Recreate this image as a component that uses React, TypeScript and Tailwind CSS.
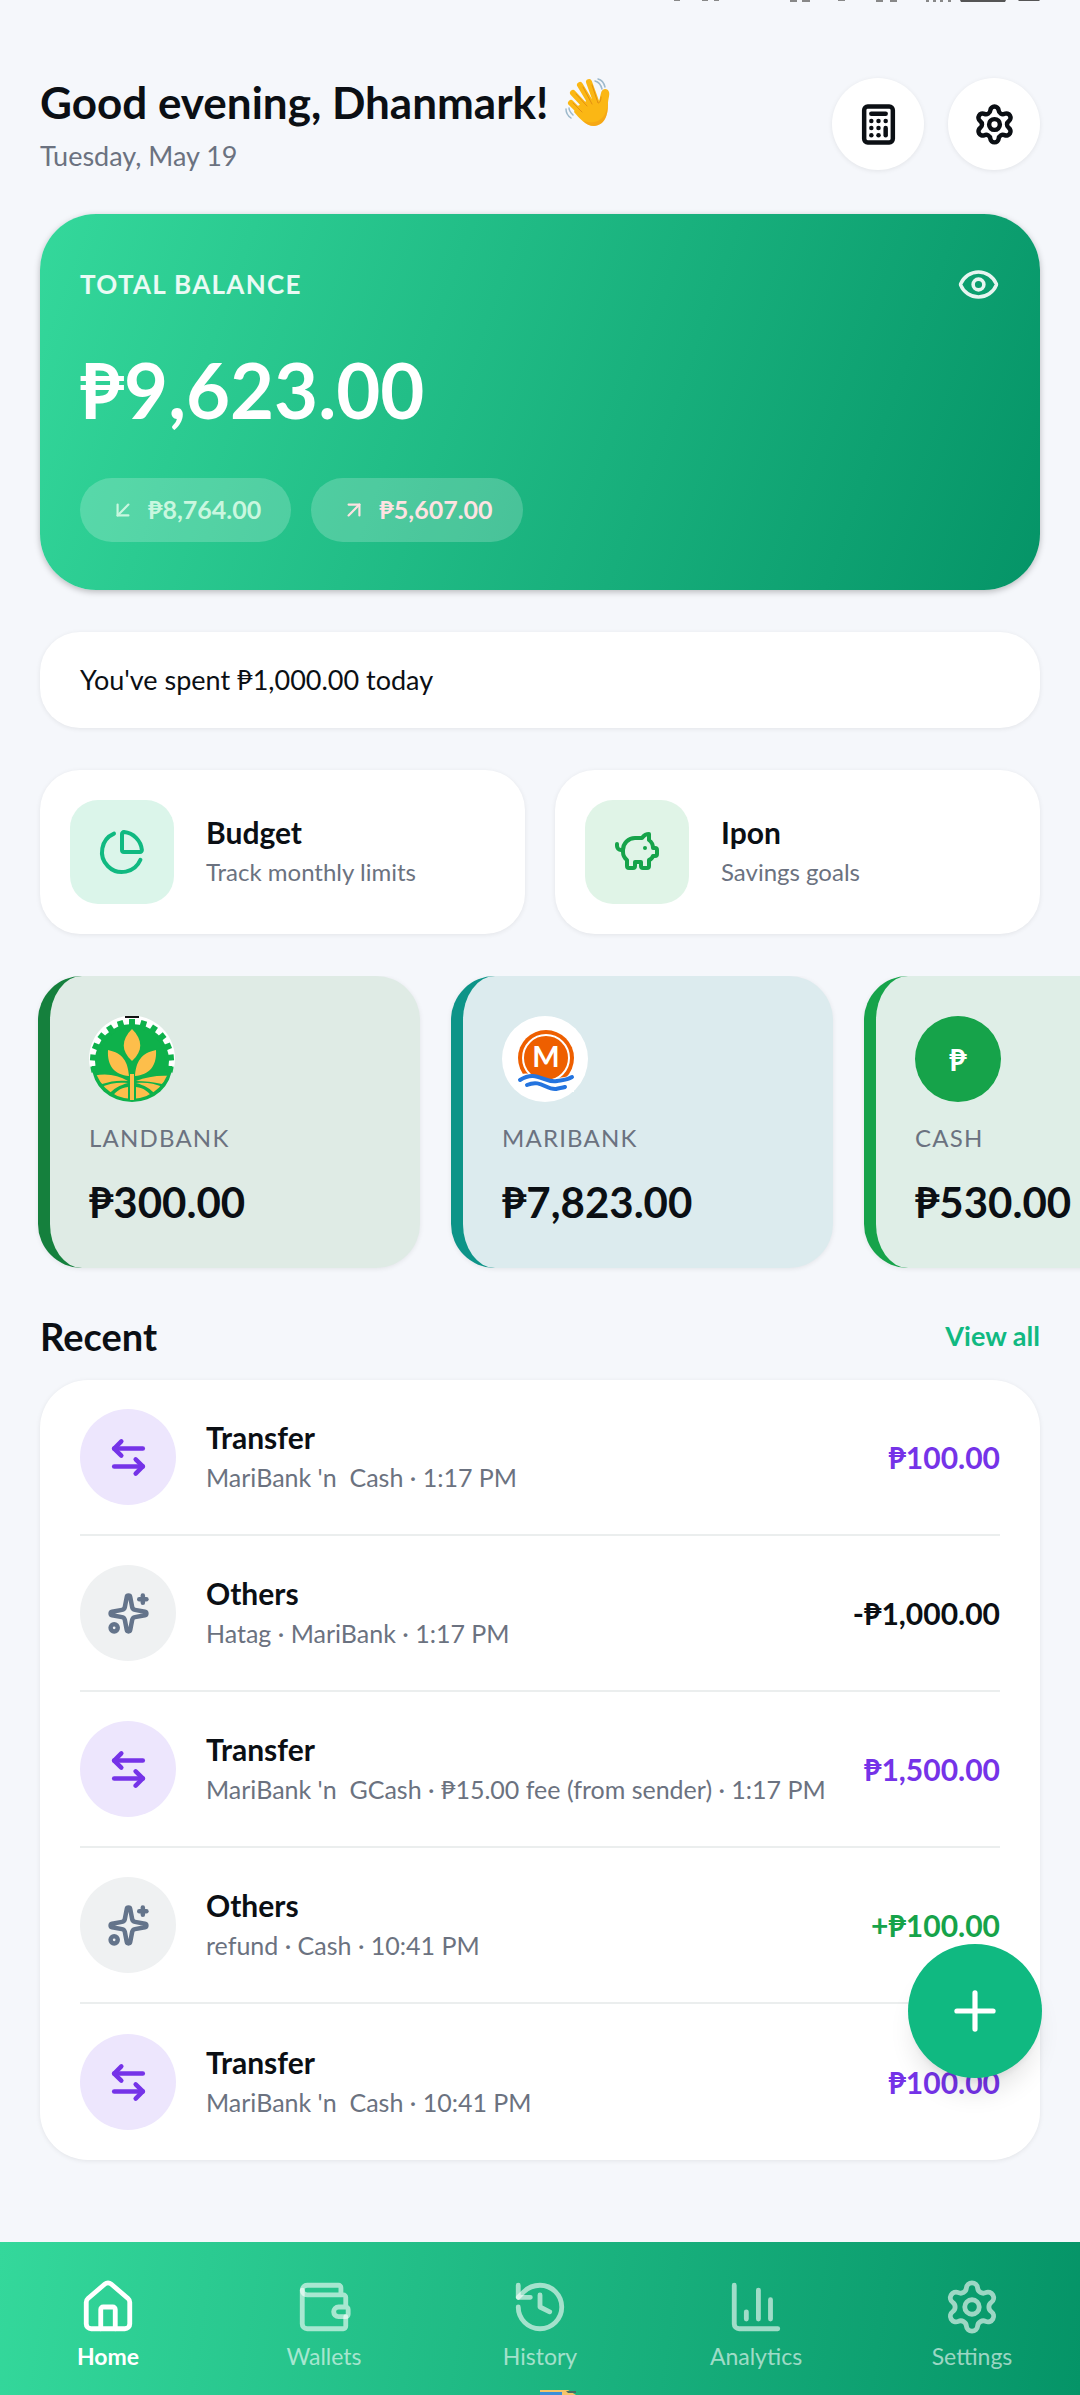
import React from 'react';
import {
  ArrowDownLeft,
  ArrowLeftRight,
  ArrowUpRight,
  Calculator,
  ChartColumn,
  ChartPie,
  Eye,
  History,
  House,
  PiggyBank,
  Plus,
  Settings,
  Sparkles,
  Wallet,
} from 'lucide-react';

const transactions = [
  { kind: 'transfer', title: 'Transfer', detail: "MariBank 'n\u00a0 Cash · 1:17 PM", amount: '₱100.00', color: 'text-[#7533e8]' },
  { kind: 'other', title: 'Others', detail: 'Hatag · MariBank · 1:17 PM', amount: '-₱1,000.00', color: 'text-[#0b0f14]' },
  { kind: 'transfer', title: 'Transfer', detail: "MariBank 'n\u00a0 GCash · ₱15.00 fee (from sender) · 1:17 PM", amount: '₱1,500.00', color: 'text-[#7533e8]' },
  { kind: 'other', title: 'Others', detail: 'refund · Cash · 10:41 PM', amount: '+₱100.00', color: 'text-[#16a34a]' },
  { kind: 'transfer', title: 'Transfer', detail: "MariBank 'n\u00a0 Cash · 10:41 PM", amount: '₱100.00', color: 'text-[#7533e8]' },
];

const tabs = [
  { label: 'Home', icon: House, active: true },
  { label: 'Wallets', icon: Wallet, active: false },
  { label: 'History', icon: History, active: false },
  { label: 'Analytics', icon: ChartColumn, active: false },
  { label: 'Settings', icon: Settings, active: false },
];

const WavingHand = () => (
  <svg viewBox="0 0 48 50" className="h-[50px] w-12 shrink-0" role="img" aria-label="Waving hand">
    <g fill="none" stroke="#9db9cb" strokeWidth="1.5" strokeLinecap="round">
      <path d="M31 4c4 1 6 4 7 8M34 2c4 1 6 4 7 8M2 32c0 4 2 7 5 9M5 31c0 3 2 5 4 7" />
    </g>
    <g stroke="#fbb714" strokeWidth="6" strokeLinecap="round">
      <path d="M7 26l12 12M9 16l14 15M16 8l12 20M25 5l8 22" />
    </g>
    <path
      d="M12 30l14-8 8 4c2-3 2-7 3-10 1-5 7-5 8-1 1 3-1 7-1 12 0 11-3 21-14 22-8 0-15-8-20-14z"
      fill="#fbb714"
    />
    <path
      d="M12 17l11 12M19 10l9 17M28 8l6 18c2 0 3-3 3-6M9 26l9 9"
      fill="none"
      stroke="#e39012"
      strokeWidth="1"
      strokeLinecap="round"
    />
    <path d="M44 27c0 11-3 21-14 22-4 0-8-2-11-5 16 5 23-4 25-17z" fill="#f19a16" opacity=".5" />
  </svg>
);

const teeth = [0, 17, 34, 51, 68, 85, 102, 258, 275, 292, 309, 326, 343];

const LandbankLogo = () => (
  <svg viewBox="0 0 86 86" className="size-[86px]" aria-hidden="true">
    <defs>
      <clipPath id="field">
        <circle cx="43" cy="45" r="38" />
      </clipPath>
    </defs>
    <path d="M1 52a43 43 0 1 1 84 0z" fill="#fff" />
    <path d="M36 1h14" stroke="#111" strokeWidth="2" />
    <circle cx="43" cy="45" r="37" fill="#0eb14b" />
    <path d="M3 50a40 36 0 0 0 80 0z" fill="#0eb14b" />
    {teeth.map((a) => (
      <rect key={a} x="40" y="3" width="6" height="9" fill="#0eb14b" transform={`rotate(${a} 43 45)`} />
    ))}
    <g fill="#fdbe4b">
      <path d="M43 13c11 11 11 22 0 32-11-10-11-21 0-32z" />
      <path d="M19 34c15 3 20 12 21 26-14-1-22-10-21-26zM67 34c-15 3-20 12-21 26 14-1 22-10 21-26z" />
      <g clipPath="url(#field)">
        <path d="M4 60c13-3 25-1 35 5-9-1-17 0-26 3zM82 60c-13-1-25 1-35 5 9 0 17 1 26 3z" />
        <path d="M12 71c9-4 18-5 27-4-8 2-15 6-20 12zM74 71c-9-4-18-5-27-4 8 2 15 6 20 12z" />
        <path d="M22 82c4-6 9-10 17-11v14zM64 82c-4-6-9-10-17-11v14z" />
      </g>
      <path d="M41 58h4v26h-4z" />
    </g>
  </svg>
);

const MaribankLogo = () => (
  <svg viewBox="0 0 86 86" className="size-[86px]" aria-hidden="true">
    <circle cx="43" cy="43" r="43" fill="#fff" />
    <circle cx="44" cy="42" r="28" fill="#ee5f00" />
    <circle cx="44" cy="42" r="23" fill="none" stroke="#fff" strokeWidth="2" />
    <text x="44" y="51" textAnchor="middle" fontSize="29" fontWeight="700" fill="#fff">
      M
    </text>
    <path d="M13 62c14-12 24 4 38 1 8-2 13-1 21-5v18H20z" fill="#fff" />
    <g fill="none" stroke="#2474df" strokeWidth="4" strokeLinecap="round">
      <path d="M18 64c17-11 24 4 37 1 6-1 10-1 15-4" />
      <path d="M25 69c14-6 19 5 29 4 4-1 6-1 9-2" />
    </g>
  </svg>
);

const CashLogo = () => (
  <span className="flex size-[86px] items-center justify-center rounded-full bg-[#16a34a] text-[30px] font-bold text-white">
    ₱
  </span>
);

const wallets = [
  { name: 'LANDBANK', amount: '₱300.00', logo: LandbankLogo, style: 'border-[#15803d] bg-[#dfebe5]' },
  { name: 'MARIBANK', amount: '₱7,823.00', logo: MaribankLogo, style: 'border-[#0d9488] bg-[#dcebee]' },
  { name: 'CASH', amount: '₱530.00', logo: CashLogo, style: 'border-[#16a34a] bg-[#dfeee7]' },
];

const StatusBar = () => (
  <svg viewBox="0 0 400 5" className="ml-auto h-[5px] w-[400px]" aria-hidden="true">
    <path
      d="M34 0h6M62 0h6M74 0h5M150 1h7M162 1h8M198 0h7M236 1h7M250 1h7M286 1h3M293 1h3M300 1h3M308 1h3"
      stroke="#888"
      strokeWidth="2"
    />
    <path d="M320 0h46l-1 2h-44zM378 0h22l-1 1h-20z" fill="#555" />
  </svg>
);

const Header = () => (
  <header className="flex items-center justify-between">
    <div>
      <h1 className="flex items-center gap-4 text-[44px] leading-[56px] font-bold">
        Good evening, Dhanmark!
        <WavingHand />
      </h1>
      <p className="mt-2 text-[27px] leading-9 text-[#6b7280]">Tuesday, May 19</p>
    </div>
    <div className="flex gap-6">
      <button
        aria-label="Calculator"
        className="flex size-[92px] items-center justify-center rounded-full bg-white shadow-[0_1px_5px_rgba(0,0,0,0.08)]"
      >
        <Calculator size={43} strokeWidth={2.5} />
      </button>
      <button
        aria-label="Settings"
        className="flex size-[92px] items-center justify-center rounded-full bg-white shadow-[0_1px_5px_rgba(0,0,0,0.08)]"
      >
        <Settings size={43} strokeWidth={2.5} />
      </button>
    </div>
  </header>
);

const BalanceCard = () => (
  <section className="mt-10 rounded-[56px] bg-linear-[110deg] from-[#34d89b] to-[#059467] px-10 py-12 text-white shadow-[0_2px_6px_rgba(0,0,0,0.25)]">
    <div className="flex h-11 items-center justify-between">
      <h2 className="text-[26px] font-bold tracking-wider text-white/90">TOTAL BALANCE</h2>
      <button aria-label="Hide balance">
        <Eye size={43} className="text-white/90" />
      </button>
    </div>
    <p className="mt-9 text-[76px] leading-[96px] font-bold">₱9,623.00</p>
    <div className="mt-10 flex gap-5">
      <span className="flex h-16 items-center gap-3 rounded-full bg-white/20 px-[30px] text-[25px] font-bold text-[#c9f7df]">
        <ArrowDownLeft size={26} />
        ₱8,764.00
      </span>
      <span className="flex h-16 items-center gap-3 rounded-full bg-white/20 px-[30px] text-[25px] font-bold text-[#fee2e2]">
        <ArrowUpRight size={26} />
        ₱5,607.00
      </span>
    </div>
  </section>
);

const Shortcuts = () => (
  <div className="mt-[42px] grid grid-cols-2 gap-[30px]">
    <a
      href="#budget"
      className="flex items-center gap-8 rounded-[40px] bg-white p-[30px] shadow-[0_1px_5px_rgba(0,0,0,0.08)]"
    >
      <span className="flex size-[104px] items-center justify-center rounded-[28px] bg-[#dbf5ea] text-[#10b981]">
        <ChartPie size={48} />
      </span>
      <span>
        <span className="block text-[30px] leading-10 font-bold">Budget</span>
        <span className="block text-2xl leading-10 text-[#6b7280]">Track monthly limits</span>
      </span>
    </a>
    <a
      href="#ipon"
      className="flex items-center gap-8 rounded-[40px] bg-white p-[30px] shadow-[0_1px_5px_rgba(0,0,0,0.08)]"
    >
      <span className="flex size-[104px] items-center justify-center rounded-[28px] bg-[#e0f4e7] text-[#16a34a]">
        <PiggyBank size={48} />
      </span>
      <span>
        <span className="block text-[30px] leading-10 font-bold">Ipon</span>
        <span className="block text-2xl leading-10 text-[#6b7280]">Savings goals</span>
      </span>
    </a>
  </div>
);

const Wallets = () => (
  <div className="-mx-10 mt-[42px] flex gap-[31px] overflow-hidden px-[38px] pb-2">
    {wallets.map(({ name, amount, logo: Logo, style }) => (
      <a
        key={name}
        href={`#${name.toLowerCase()}`}
        className={`block h-[292px] w-[382px] shrink-0 rounded-[44px] border-l-12 pt-10 pl-[39px] shadow-[0_1px_5px_rgba(0,0,0,0.08)] ${style}`}
      >
        <Logo />
        <p className="mt-4 text-2xl leading-10 tracking-wider text-[#6b7280]">{name}</p>
        <p className="mt-4 text-[42px] leading-14 font-bold">{amount}</p>
      </a>
    ))}
  </div>
);

const Recent = () => (
  <section className="mt-7">
    <div className="flex h-16 items-center justify-between">
      <h2 className="text-[38px] font-bold">Recent</h2>
      <a href="#history" className="text-[27px] font-bold text-[#10b981]">
        View all
      </a>
    </div>
    <ul className="mt-3 divide-y-2 divide-[#ebeeee] rounded-[48px] bg-white px-10 shadow-[0_1px_5px_rgba(0,0,0,0.08)]">
      {transactions.map((t, i) => (
        <li key={i} className="flex h-[156px] items-center">
          {t.kind === 'transfer' ? (
            <span className="flex size-24 shrink-0 items-center justify-center rounded-full bg-[#ede6fd] text-[#7533e8]">
              <ArrowLeftRight size={43} strokeWidth={2.5} />
            </span>
          ) : (
            <span className="flex size-24 shrink-0 items-center justify-center rounded-full bg-[#eff1f2] text-[#64748b]">
              <Sparkles size={43} strokeWidth={2.5} />
            </span>
          )}
          <div className="ml-[30px] min-w-0 flex-1 whitespace-nowrap">
            <p className="text-[30px] leading-10 font-bold">{t.title}</p>
            <p className="text-[25px] leading-10 text-[#6b7280]">{t.detail}</p>
          </div>
          <p className={`text-[30px] font-bold ${t.color}`}>{t.amount}</p>
        </li>
      ))}
    </ul>
  </section>
);

const TabBar = () => (
  <nav className="fixed inset-x-0 bottom-0 grid h-[153px] grid-cols-5 bg-linear-[98deg] from-[#34d89b] to-[#059467]">
    {tabs.map(({ label, icon: Icon, active }) => (
      <a
        key={label}
        href={`#${label.toLowerCase()}`}
        className={`flex flex-col items-center pt-9 text-[23px] leading-8 ${active ? 'font-bold text-white' : 'text-white/60'}`}
      >
        <Icon size={58} />
        <span className="mt-1">{label}</span>
      </a>
    ))}
    <svg viewBox="0 0 36 5" className="absolute bottom-0 left-1/2 h-[5px] w-9" aria-hidden="true">
      <path d="M0 0h28l8 5H0z" fill="#f4c56a" />
      <path d="M0 2h22v3H0z" fill="#3b8fd9" />
      <path d="M26 1h10v2H28z" fill="#4b6b62" />
    </svg>
  </nav>
);

export default function App() {
  return (
    <div className="min-h-screen bg-[#f5f7fb] px-10 pb-[235px] font-['Lato',sans-serif] text-[#0b0f14]">
      <StatusBar />
      <main className="pt-[69px]">
        <Header />
        <BalanceCard />
        <p className="mt-[42px] rounded-[40px] bg-white px-10 py-7 text-[27px] leading-10 shadow-[0_1px_5px_rgba(0,0,0,0.08)]">
          You've spent ₱1,000.00 today
        </p>
        <Shortcuts />
        <Wallets />
        <Recent />
      </main>
      <button
        aria-label="Add transaction"
        className="fixed right-[38px] bottom-[317px] flex size-[134px] items-center justify-center rounded-full bg-[#10b981] text-white shadow-xl"
      >
        <Plus size={62} />
      </button>
      <TabBar />
    </div>
  );
}
